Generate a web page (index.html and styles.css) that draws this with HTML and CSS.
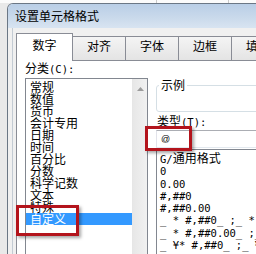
FILE: index.html
```html
<!DOCTYPE html>
<html lang="zh-CN">
<head>
    <meta charset="UTF-8">
    <meta name="viewport" content="width=device-width, initial-scale=1.0">
    <title>设置单元格格式</title>
    <link rel="stylesheet" href="styles.css">
</head>
<body>
<div class="screen">
    <div class="dialog">
        <div class="titlebar">设置单元格格式</div>
        <div class="client">
            <div class="tabs">
                <div class="tab active">数字</div>
                <div class="tab">对齐</div>
                <div class="tab">字体</div>
                <div class="tab">边框</div>
                <div class="tab">填充</div>
            </div>
            <div class="panel">
                <div class="col-left">
                    <div class="label">分类<span class="asc">(C):</span></div>
                    <div class="listbox">
                        <ul class="cats">
                            <li>常规</li>
                            <li>数值</li>
                            <li>货币</li>
                            <li>会计专用</li>
                            <li>日期</li>
                            <li>时间</li>
                            <li>百分比</li>
                            <li>分数</li>
                            <li>科学记数</li>
                            <li>文本</li>
                            <li>特殊</li>
                            <li class="selected">自定义</li>
                        </ul>
                        <div class="scrollbar">
                            <svg class="arrow" width="7" height="4" viewBox="0 0 7 4"><path d="M0 4 L3.5 0 L7 4 Z" fill="#9c9c9c"/></svg>
                        </div>
                    </div>
                </div>
                <div class="col-right">
                    <fieldset class="sample"><legend>示例</legend></fieldset>
                    <div class="label">类型<span class="asc">(T):</span></div>
                    <div class="textbox">@</div>
                    <ul class="types">
                        <li>G/<span class="cjk">通用格式</span></li>
                        <li>0</li>
                        <li>0.00</li>
                        <li>#,##0</li>
                        <li>#,##0.00</li>
                        <li>_ * #,##0_ ;_ * -#,##0_ ;_ * "-"_ ;_ @_ </li>
                        <li>_ * #,##0.00_ ;_ * -#,##0.00_ ;_ * "-"??_ ;_ @_ </li>
                        <li>_ ¥* #,##0_ ;_ ¥* -#,##0_ ;_ ¥* "-"_ ;_ @_ </li>
                    </ul>
                </div>
            </div>
        </div>
    </div>

    <!-- красные рамки-пометки поверх диалога -->
    <div class="mark mark-type"></div>
    <div class="mark mark-custom"></div>
</div>
</body>
</html>
```

FILE: styles.css
```css
* {
    box-sizing: border-box;
}
body {
    margin: 0;
    font-family: "Noto Sans CJK SC", sans-serif;
    font-size: 12px;
    color: #000;
}
.screen {
    position: relative;
    width: 256px;
    height: 254px;
    overflow: hidden;
    padding: 3px 0 0 7px;
    background:
        linear-gradient(#c9c9c9, #c9c9c9) 156px 0 / 1px 3px no-repeat,
        linear-gradient(#c9c9c9, #c9c9c9) 228px 0 / 1px 3px no-repeat,
        linear-gradient(#fbfbfb, #fbfbfb) 0 0 / 100% 3px no-repeat,
        #e9e9e9;
}
.dialog {
    width: 300px;
    height: 260px;
    border: 1px solid #6b7785;
    border-bottom: 0;
    border-radius: 6px 6px 0 0;
    background: #f0f0f0;
    overflow: hidden;
}
.titlebar {
    height: 24px;
    padding-left: 7px;
    line-height: 24px;
    background: linear-gradient(#b9cee6, #c9d9eb 55%, #d8e4f1);
}
.client {
    margin-left: 4px;
    border-left: 1px solid #c3cbd3;
    padding: 5px 0 0 3px;
}
.tabs {
    display: flex;
    align-items: flex-end;
    height: 28px;
    margin-bottom: -1px;
    position: relative;
    z-index: 1;
}
.tab {
    flex: none;
    width: 54px;
    height: 25px;
    margin-left: -1px;
    padding-top: 2px;
    border: 1px solid #898c95;
    background: linear-gradient(#f4f4f4, #e4e4e4);
    text-align: center;
    line-height: 14px;
}
.tab.active {
    width: 57px;
    height: 28px;
    margin-left: 0;
    padding-top: 4px;
    border-bottom: 0;
    background: #fff;
    position: relative;
    z-index: 1;
}
.panel {
    display: flex;
    gap: 8px;
    height: 220px;
    margin-right: 6px;
    padding-left: 8px;
    border: 1px solid #898c95;
    background: #fff;
}
.label {
    line-height: 14px;
    white-space: nowrap;
}
.asc {
    font-family: "DejaVu Sans Mono", monospace;
    font-size: 10.5px;
}
.col-left {
    flex: none;
    width: 123px;
}
.listbox {
    display: flex;
    height: 190px;
    margin-top: 2px;
    border: 1px solid #828790;
}
.cats {
    flex: 1;
    margin: 0;
    padding: 2px 0 0;
    list-style: none;
}
.cats li {
    height: 12px;
    padding-left: 4px;
    line-height: 12px;
    white-space: nowrap;
}
.cats li.selected {
    background: #3399ff;
    color: #fff;
}
.scrollbar {
    flex: none;
    width: 15px;
    display: flex;
    justify-content: center;
    align-items: flex-start;
    padding-top: 8px;
    border-left: 1px solid #e6e6e6;
    background: linear-gradient(90deg, #e7e7e7, #f1f1f1);
}
.arrow {
    display: block;
}
.col-right {
    flex: 1;
    min-width: 0;
    margin-right: 8px;
}
.sample {
    height: 34px;
    margin: 17px 0 0;
    padding: 0;
    border: 1px solid #d5dfe5;
    border-radius: 3px;
}
.sample legend {
    margin-left: 2px;
    padding: 0 2px;
    line-height: 14px;
}
.col-right .label {
    margin-top: 2px;
    padding-left: 1px;
}
.textbox {
    height: 18px;
    margin-top: 1px;
    padding-left: 4px;
    border: 1px solid;
    border-color: #abadb3 #dbdfe6 #e3e9ef #e2e3ea;
    font-family: "Liberation Sans", sans-serif;
    font-size: 9px;
    line-height: 16px;
}
.types {
    height: 120px;
    margin: 1px 0 0;
    padding: 3px 0 0 3px;
    border: 1px solid #828790;
    list-style: none;
    overflow: hidden;
    font-family: "DejaVu Sans Mono", monospace;
    font-size: 10.5px;
}
.types li {
    height: 12.3px;
    line-height: 12.3px;
    white-space: pre;
}
.cjk {
    font-family: "Noto Sans CJK SC", sans-serif;
    font-size: 12px;
    line-height: 1px;
}
.mark {
    position: absolute;
    border: 3px solid #b3141c;
    box-shadow: 2px 2px 3px rgba(0, 0, 0, 0.35);
}
.mark-type {
    left: 145px;
    top: 126px;
    width: 47px;
    height: 25px;
}
.mark-custom {
    left: 16px;
    top: 205px;
    width: 63px;
    height: 31px;
}
```
